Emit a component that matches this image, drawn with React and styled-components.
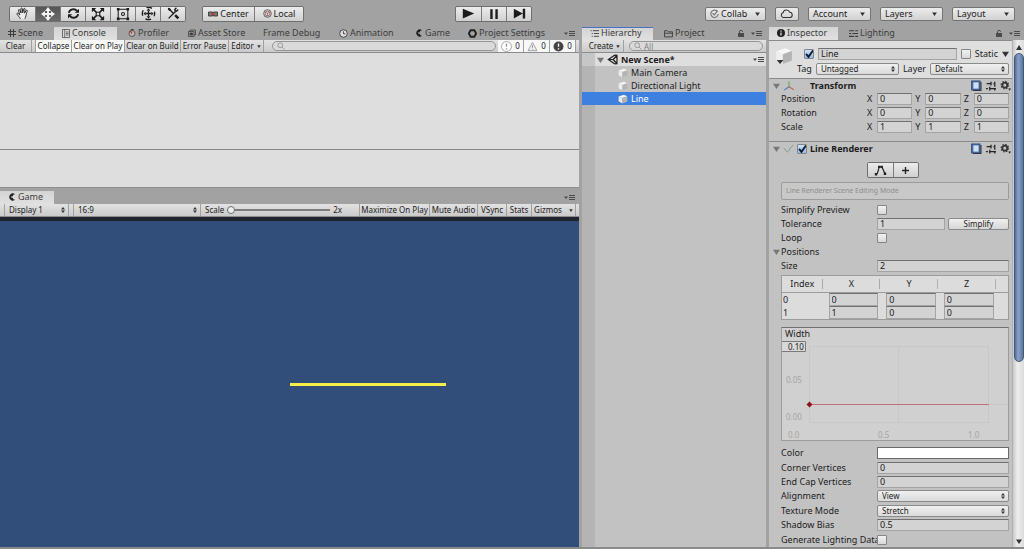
import React from "react";
import styled, { createGlobalStyle, css } from "styled-components";

const GlobalStyle = createGlobalStyle`
  *, *::before, *::after { box-sizing: border-box; }
  body { margin: 0; background: #a2a2a2; }
  body, button, input, select, table {
    font-family: "Noto Sans", "Lucida Grande", sans-serif;
    font-size: 9px;
    line-height: 12px;
    color: #1c1c1c;
  }
  button, input, select { margin: 0; padding: 0; border: 0; border-radius: 0; background: none; appearance: none; outline: none; }
  svg { display: block; flex: none; }
`;

/* ---------- frame ---------- */
const Editor = styled.div`
  display: flex;
  flex-direction: column;
  height: 100vh;
  overflow: hidden;
  border-bottom: 2px solid #8a8a8a;
  background: #a2a2a2;
  white-space: nowrap;
`;
const TopBar = styled.header`
  display: flex;
  align-items: center;
  flex: none;
  height: 27px;
  padding: 0 9px;
`;
const Spacer = styled.div`
  flex: ${(p) => p.$grow || 1} 1 0;
`;
const Workspace = styled.div`
  flex: 1;
  min-height: 0;
  display: grid;
  grid-template-columns: minmax(0, 1fr) 184px 255px;
  column-gap: 3px;
`;
const Column = styled.section`
  display: flex;
  flex-direction: column;
  min-width: 0;
  min-height: 0;
`;

/* ---------- top bar ---------- */
const ButtonGroup = styled.div`
  display: flex;
  height: 16px;
  margin-right: ${(p) => p.$after || 0}px;
  border: 1px solid #6e6e6e;
  border-radius: 2px;
  overflow: hidden;
`;
const GroupButton = styled.button`
  display: flex;
  align-items: center;
  justify-content: center;
  gap: 2px;
  width: ${(p) => p.$w || 25}px;
  background: ${(p) => (p.$on ? "linear-gradient(#555, #6a6a6a)" : "linear-gradient(#ececec, #d0d0d0)")};
  color: ${(p) => (p.$on ? "#f4f4f4" : "#1c1c1c")};
  & + & { border-left: 1px solid #7c7c7c; }
`;
const RightGroup = styled.div`
  display: flex;
  gap: 9px;
`;
const DropButton = styled.button`
  display: flex;
  align-items: center;
  gap: 2px;
  width: ${(p) => p.$w}px;
  height: 14px;
  padding: 0 5px 0 4px;
  border: 1px solid #747474;
  border-radius: 2px;
  background: linear-gradient(#ececec, #d2d2d2);
  & > svg:last-child:not(:first-child) { margin-left: auto; }
`;

/* ---------- tabs ---------- */
const TabBar = styled.nav`
  display: flex;
  align-items: flex-end;
  flex: none;
  height: ${(p) => p.$h || 13}px;
  padding-right: 4px;
`;
const Tab = styled.button`
  display: flex;
  align-items: center;
  gap: 2px;
  width: ${(p) => p.$w}px;
  height: 13px;
  padding: 0 0 1px 8px;
  color: #3c3c3c;
  ${(p) =>
    p.$active &&
    css`
      margin-right: 3px;
      background: linear-gradient(#d4d4d4, #e0e0e0);
    `}
  ${(p) => p.$focus && css`
    background: linear-gradient(#4a6fc4 1px, #d4d4d4 1px, #e0e0e0);
  `}
`;
const TabTools = styled.div`
  display: flex;
  align-items: center;
  gap: 7px;
  height: 13px;
  margin-left: auto;
`;

/* ---------- strips ---------- */
const Strip = styled.div`
  display: flex;
  align-items: stretch;
  flex: none;
  height: 13px;
  border-bottom: 1px solid #8c8c8c;
  padding-right: 3px;
  background: linear-gradient(#e2e2e2, #cacaca);
  font-size: 8px;
`;
const StripButton = styled.button`
  display: flex;
  align-items: center;
  justify-content: center;
  gap: 3px;
  flex: none;
  width: ${(p) => p.$w}px;
  font-size: 8px;
  border-right: 1px solid #a0a0a0;
  background: ${(p) => (p.$on ? "#f8f8f8" : "transparent")};
`;
const Gap = styled.div`
  flex: none;
  width: ${(p) => p.$w}px;
  border-right: ${(p) => (p.$line ? "1px solid #a0a0a0" : "0")};
`;
const SearchBox = styled.label`
  display: flex;
  align-items: center;
  gap: 2px;
  flex: 1;
  min-width: 0;
  margin: 1px ${(p) => p.$right}px 1px ${(p) => p.$left}px;
  padding: 0 4px;
  border: 1px solid #959595;
  border-radius: 6px;
  background: #dadada;
`;
const SearchInput = styled.input`
  flex: 1;
  min-width: 0;
  height: 8px;
  font-size: 8px;
  line-height: 8px;
  &::placeholder { color: #848484; opacity: 1; }
`;

/* ---------- console & game ---------- */
const LogList = styled.div`
  flex: none;
  height: 97px;
  background: #dedede;
  border-bottom: 1px solid #888;
`;
const LogDetail = styled.div`
  flex: none;
  height: 38px;
  background: #dedede;
  border-bottom: 1px solid #8e8e8e;
`;
const StripSelect = styled.div`
  display: grid;
  grid-template-columns: 1fr auto;
  align-items: center;
  flex: none;
  width: ${(p) => p.$w}px;
  padding: 0 3px 0 4px;
  border-right: 1px solid #a0a0a0;
  select { font-size: 8px; }
`;
const ScaleLabel = styled.label`
  display: flex;
  align-items: center;
  flex: 1;
  gap: 3px;
  padding-left: 4px;
`;
const Range = styled.input.attrs({ type: "range" })`
  width: 103px;
  height: 9px;
  &::-webkit-slider-runnable-track { height: 2px; background: #7c7c7c; }
  &::-webkit-slider-thumb {
    appearance: none;
    width: 8px;
    height: 8px;
    margin-top: -3px;
    border: 1px solid #6e6e6e;
    border-radius: 50%;
    background: #eee;
  }
`;
const GameView = styled.div`
  flex: 1;
  display: flex;
  align-items: center;
  border-top: 4px solid #20242c;
  background: #314d79;
`;
const DrawnLine = styled.div`
  width: 27%;
  height: 3px;
  margin-left: 50%;
  background: #f5ee45;
`;

/* ---------- hierarchy ---------- */
const Tree = styled.ul`
  flex: 1;
  margin: 0;
  padding: 0;
  list-style: none;
  background: linear-gradient(90deg, #b4b4b4 13px, #c2c2c2 13px);
`;
const TreeItem = styled.li`
  display: flex;
  align-items: center;
  gap: 3px;
  height: 13px;
  padding-left: 36px;
  color: ${(p) => (p.$selected ? "#fff" : "#1c1c1c")};
  background: ${(p) => (p.$selected ? "#3d80df" : "transparent")};
`;
const SceneRow = styled.li`
  display: flex;
  align-items: center;
  gap: 3px;
  height: 13px;
  padding: 0 2px 0 15px;
  font-weight: bold;
  background: linear-gradient(90deg, #c6c6c6 13px, #dedede 13px);
  & > svg:last-child { margin-left: auto; }
`;

/* ---------- inspector ---------- */
const InspectorBody = styled.div`
  flex: 1;
  min-height: 0;
  display: grid;
  grid-template-columns: minmax(0, 1fr) 12px;
`;
const Properties = styled.div`
  display: flex;
  flex-direction: column;
  min-height: 0;
  border-top: 1px solid #8a8a8a;
  background: #c2c2c2;
`;
const ObjectHeader = styled.div`
  display: grid;
  grid-template-columns: 22px minmax(0, 1fr);
  flex: none;
  height: 38px;
  padding: 6px 3px 0 6px;
  background: #dedede;
  border-bottom: 1px solid #8a8a8a;
`;
const HeaderRows = styled.div`
  display: flex;
  flex-direction: column;
  gap: 2px;
`;
const HeaderRow = styled.div`
  display: flex;
  align-items: center;
  gap: 4px;
  height: 13px;
  padding-left: ${(p) => p.$indent || 0}px;
`;
const TextField = styled.input`
  flex: 1;
  min-width: 0;
  width: 100%;
  height: ${(p) => p.$h || 12}px;
  padding: 0 2px 1px;
  border: 1px solid #a4a4a4;
  border-top-color: #707070;
  background: #d3d3d3;
  line-height: 9px;
`;
const SelectFrame = styled.div`
  display: grid;
  grid-template-columns: 1fr auto;
  align-items: center;
  flex: ${(p) => (p.$w ? "none" : 1)};
  width: ${(p) => (p.$w ? p.$w + "px" : "auto")};
  height: 12px;
  padding: 0 3px 0 4px;
  border: 1px solid #8a8a8a;
  border-radius: 2px;
  background: linear-gradient(#f0f0f0, #dadada);
  select { font-size: 8px; line-height: 10px; }
`;
const Tick = styled.input.attrs({ type: "checkbox" })`
  flex: none;
  width: 10px;
  height: 10px;
  border: 1px solid #858585;
  border-radius: 1px;
  background: linear-gradient(#f2f2f2, #d8d8d8);
  &:checked {
    background: no-repeat center / 9px 9px
        url("data:image/svg+xml,%3Csvg xmlns='http://www.w3.org/2000/svg' viewBox='0 0 9 9'%3E%3Cpath d='M1.5 4.2 3.8 7 8 1' fill='none' stroke='%23101c30' stroke-width='1.8'/%3E%3C/svg%3E"),
      linear-gradient(#cfe2fa, #93bcec);
  }
`;
const ComponentTitle = styled.div`
  display: flex;
  align-items: center;
  flex: none;
  height: ${(p) => (p.$line ? 14 : 13)}px;
  padding: 0 1px 0 4px;
  gap: 3px;
  font-weight: bold;
  border-top: ${(p) => (p.$line ? "1px solid #8a8a8a" : "0")};
`;
const TitleTools = styled.div`
  display: flex;
  align-items: center;
  gap: 4px;
  margin-left: auto;
`;
const Fields = styled.div`
  display: grid;
  grid-auto-rows: ${(p) => (p.$fill ? "minmax(14px, 1fr)" : "14px")};
  flex: ${(p) => (p.$fill ? 1 : "none")};
  padding: 0 3px 0 12px;
`;
const Row = styled.div`
  display: flex;
  align-items: center;
  gap: 3px;
`;
const Label = styled.label`
  flex: none;
  width: ${(p) => p.$w || 93}px;
`;
const Axis = styled.label`
  display: grid;
  grid-template-columns: 10px 1fr;
  align-items: center;
  flex: 1;
  min-width: 0;
`;
const Break = styled.div`
  flex: none;
  height: 7px;
`;
const Foldout = styled.button`
  display: flex;
  align-items: center;
  gap: 1px;
  margin-left: -8px;
`;
const Modes = styled.div`
  display: flex;
  justify-content: center;
  flex: none;
  padding: 7px 0 4px 4px;
`;
const HelpBox = styled.p`
  flex: none;
  height: 18px;
  margin: 0 3px 3px 12px;
  padding: 2px 4px;
  border: 1px solid #9c9c9c;
  border-radius: 2px;
  font-size: 7px;
  background: #c8c8c8;
  color: #8e8e8e;
`;
const SmallButton = styled.button`
  flex: none;
  width: 61px;
  height: 12px;
  border: 1px solid #8a8a8a;
  border-radius: 2px;
  background: linear-gradient(#f0f0f0, #d6d6d6);
  font-size: 8px;
  line-height: 10px;
`;
const PointTable = styled.table`
  flex: none;
  table-layout: fixed;
  width: calc(100% - 15px);
  margin: 2px 3px 7px 12px;
  border-collapse: collapse;
  border: 1px solid #9c9c9c;
  background: #dcdcdc;
  th {
    height: 17px;
    padding: 0;
    font-weight: normal;
    background: linear-gradient(90deg, transparent calc(100% - 1px), #a8a8a8 0) no-repeat center / 100% 10px;
    border-bottom: 1px solid #9c9c9c;
  }
  th:last-child { background: none; }
  td { height: 13px; padding: 0 2px 0 6px; }
  td:first-child { padding-left: 1px; }
  td input { display: block; }
`;
const Curve = styled.figure`
  flex: none;
  margin: 0 3px 5px 12px;
  border: 1px solid #9c9c9c;
  border-top-color: #707070;
  background: #d0d0d0;
  figcaption { padding-left: 3px; height: 12px; line-height: 12px; }
  svg { width: 100%; height: auto; }
  text { font-size: 8px; fill: #a4a4a4; }
  text.current { fill: #222; }
`;
const Swatch = styled.input`
  flex: 1;
  height: 12px;
  border: 1px solid #6a6a6a;
  background: #fff;
  &::-webkit-color-swatch-wrapper { padding: 0; }
  &::-webkit-color-swatch { border: 0; }
`;
const ScrollTrack = styled.div`
  display: flex;
  flex-direction: column;
  align-items: center;
  padding: 5px 0 3px;
  gap: 3px;
  border-left: 1px solid #b0b0b0;
  background: linear-gradient(90deg, #c9c9c9, #ededed 40%, #dcdcdc);
`;
const ScrollThumb = styled.div`
  width: 10px;
  flex: 0 0 62%;
  border: 1px solid #43597c;
  border-radius: 5px;
  background: linear-gradient(90deg, #536e98, #89a2c5 40%, #5b769f);
`;

/* ---------- icons ---------- */
const Svg = ({ w = 8, h = w, box = 16, children, ...rest }) => (
  <svg width={w} height={h} viewBox={`0 0 ${box} ${(box * h) / w}`} fill="none" stroke="currentColor" strokeWidth="1.6" aria-hidden="true" {...rest}>
    {children}
  </svg>
);
const Down = ({ w = 5, color = "#333" }) => (
  <svg width={w} height={w - 1} viewBox="0 0 6 5" fill={color} aria-hidden="true"><path d="M0 0.5h6L3 5z" /></svg>
);
const Up = () => (
  <svg width="6" height="5" viewBox="0 0 6 5" fill="#333" aria-hidden="true"><path d="M0 5h6L3 0z" /></svg>
);
const UpDown = () => (
  <svg width="4" height="6" viewBox="0 0 4 6" fill="#333" aria-hidden="true"><path d="M0 2.6 2 0l2 2.6zM0 3.4h4L2 6z" /></svg>
);
const PaneMenu = () => (
  <svg width="11" height="5" viewBox="0 0 11 5" fill="#4a4a4a" aria-hidden="true">
    <path d="M0 1.500h4L2 4zM5 0h6v1H5zM5 2h6v1H5zM5 4h6v1H5z" />
  </svg>
);
const Lock = () => (
  <svg width="6" height="7" viewBox="0 0 6 7" aria-hidden="true">
    <path d="M0 3h6v4H0z" fill="#4a4a4a" />
    <path d="M1.5 3V1.8a1.5 1.5 0 0 1 3 0" fill="none" stroke="#4a4a4a" />
  </svg>
);
const Hand = () => (
  <Svg w={13} strokeWidth="1.1">
    <path d="M5.4 14.5C4 12 2.3 10.4 1.2 8.9c-.6-1 .7-1.8 1.6-.9L4.7 9.8 3 4.2c-.3-1.2 1.3-1.6 1.7-.5L6.2 7.4 6 2.2c0-1.3 1.7-1.3 1.8 0L8.3 7l1.2-4.6c.4-1.2 1.9-.8 1.7.4L10.500 7.600l1.900-3.200c.6-1 1.900-.3 1.500.8-1 2.600-1.400 4-1.700 5.700-.3 1.500-.8 2.600-1.300 3.600" fill="#eee" />
  </Svg>
);
const Move = () => (
  <Svg w={14} strokeWidth="2.200">
    <path d="M8 3v10M3 8h10" />
    <path d="M8 0l3.500 4.500h-7zM8 16l3.500-4.500h-7zM0 8l4.500-3.500v7zM16 8l-4.500-3.500v7z" fill="currentColor" stroke="none" />
  </Svg>
);
const Rotate = () => (
  <Svg w={13} strokeWidth="2.300">
    <path d="M2.300 7.200c.7-4.500 7-6 10-2.500M13.700 8.800c-.7 4.500-7 6-10 2.500" />
    <path d="M14.800 2v5.200H9.600zM1.200 14V8.800h5.200z" fill="currentColor" stroke="none" />
  </Svg>
);
const Scale = () => (
  <Svg w={14}>
    <path d="M3 3l3 3M13 3l-3 3M3 13l3-3M13 13l-3-3" strokeWidth="2" />
    <path d="M1 1h5L1 6zM15 1v5l-5-5zM1 15v-5l5 5zM15 15h-5l5-5z" fill="currentColor" stroke="none" />
    <path d="M6 6h4v4H6z" strokeWidth="1.300" />
  </Svg>
);
const RectTool = () => (
  <Svg w={14} strokeWidth="1.200">
    <path d="M2.500 2.500h11v11h-11z" /><circle cx="8" cy="8" r="1.700" />
    <path d="M1 1h3v3H1zM12 1h3v3h-3zM1 12h3v3H1zM12 12h3v3h-3z" fill="currentColor" stroke="none" />
  </Svg>
);
const MultiTool = () => (
  <Svg w={15} strokeWidth="1.400">
    <circle cx="8" cy="8" r="6.600" strokeDasharray="6.200 4.170" strokeDashoffset="3.100" />
    <path d="M8 5v6M5 8h6" />
    <path d="M8 2.500l2 2.500H6zM8 13.500l2-2.500H6zM2.500 8L5 6v4zM13.500 8L11 6v4z" fill="currentColor" stroke="none" />
  </Svg>
);
const Wrench = () => (
  <Svg w={13} strokeWidth="1.700">
    <path d="M2 14l8.500-8.500M13.800 3.200l-2 2-2-.8L9.600 3l2-2M1.500 1.500l6 6" />
    <path d="M10 10l4 4" strokeWidth="3" />
    <path d="M1 3l2-2 2 2-2 2z" fill="currentColor" stroke="none" />
  </Svg>
);
const PivotIcon = () => (
  <svg width="10" height="6" viewBox="0 0 10 6" aria-hidden="true">
    <path d="M.5 1h4v4h-4zM5.500 1h4v4h-4z" fill="#777" stroke="#444" /><path d="M3 2h4v2H3z" fill="#b04a4a" />
  </svg>
);
const CubeLine = () => (
  <Svg w={9} stroke="#555"><circle cx="8" cy="8" r="6.800" /><path d="M8 3.500l4 2v5l-4 2-4-2v-5zM4 5.500l4 2 4-2M8 7.500v5" stroke="#964f4f" strokeWidth="1.300" /></Svg>
);
const Play = () => <Svg w={13} fill="currentColor" stroke="none"><path d="M1 2l14 6-14 6z" /></Svg>;
const Pause = () => <Svg w={12} fill="currentColor" stroke="none"><path d="M3 1.500h3.200v13H3zM9.800 1.500H13v13H9.800z" /></Svg>;
const Step = () => <Svg w={13} fill="currentColor" stroke="none"><path d="M1 2l11 6-11 6zM12 2h3v12h-3z" /></Svg>;
const CollabIcon = () => (
  <Svg w={9} stroke="#777" strokeWidth="2"><path d="M13.500 5A6.500 6.500 0 1 0 14.500 9M4.500 7.500l3 3L14 3" /></Svg>
);
const Cloud = () => (
  <Svg w={13} stroke="#333" strokeWidth="1.300"><path d="M4 13a3 3 0 0 1-.3-5.800A4.300 4.300 0 0 1 12 6.500 3.300 3.300 0 0 1 12.500 13z" /></Svg>
);
const Hash = () => <Svg strokeWidth="2"><path d="M5 0v16M11 0v16M0 5h16M0 11h16" /></Svg>;
const ConsoleIcon = () => <Svg w={8} h={9}><path d="M1 1h14v16H1zM5.500 1v16M8 6h5M8 9h5M8 12h5" strokeWidth="1.400" /></Svg>;
const ProfilerIcon = () => <Svg><circle cx="8" cy="9" r="6" fill="#c4b4b4" /><path d="M8 9L4 3" stroke="#b02a2a" strokeWidth="2.200" /><path d="M6 1h5" strokeWidth="2.500" /></Svg>;
const StoreIcon = () => <Svg><path d="M1 5h11v10H1zM4 5V2h11v10h-3" /><path d="M4 8h5v4H4z" fill="currentColor" /></Svg>;
const ClockIcon = () => <Svg w={9}><circle cx="8" cy="8" r="6.800" fill="#ddd" /><path d="M8 4v4.500h3.500" /></Svg>;
const GameIcon = () => <Svg fill="#222" stroke="none"><path d="M14 2.500A7 7 0 1 0 14 13.500L10 12V9.500H6.500v-3H10V4z" /></Svg>;
const HexIcon = () => <Svg w={9} stroke="#222" strokeWidth="3.400"><path d="M4.700 2.300h6.600L14.500 8l-3.200 5.700H4.700L1.500 8z" /></Svg>;
const ListIcon = () => <Svg w={9}><path d="M1 3h2M5 3h11M3 8h2M7 8h9M3 13h2M7 13h9" /></Svg>;
const FolderIcon = () => <Svg w={9}><path d="M1 14V3h5l2 2h7v9zM1 7.500h14" /></Svg>;
const InfoIcon = () => <Svg><circle cx="8" cy="8" r="8" fill="#222" stroke="none" /><path d="M8 3v2.500M8 7v6" stroke="#eee" strokeWidth="2.400" /></Svg>;
const LightIcon = () => <Svg w={9}><path d="M0 3h9M11 3h5M0 8h4M6 8h10M0 13h9M11 13h5" strokeWidth="2" /></Svg>;
const Lens = () => <Svg stroke="#888" strokeWidth="1.500"><circle cx="6.500" cy="6.500" r="4.800" /><path d="M10 10l5 5" /></Svg>;
const Bubble = ({ dark }) => (
  <Svg w={11} stroke={dark ? "none" : "#999"} strokeWidth="1.200">
    <circle cx="8" cy="8" r="7.200" fill={dark ? "#444" : "#fff"} /><path d="M8 3.500v5M8 10.500v1.800" stroke={dark ? "#fff" : "#999"} strokeWidth="2" />
  </Svg>
);
const Warn = () => <Svg w={11} stroke="#999" strokeWidth="1.300"><path d="M8 2l6.500 12h-13z" fill="#eee" /><path d="M8 6v4M8 11.500v1" /></Svg>;
const UnityLogo = () => (
  <Svg w={11} stroke="#222" strokeWidth="1.800"><path d="M11.500 1.500L2 8l9.500 6.500M11.500 1.500l3 .5v12l-3 .5M2 8h7M9 8l5-5.500M9 8l5 5.500" /></Svg>
);
const Cube = ({ w = 10 }) => (
  <Svg w={w} stroke="none">
    <path d="M1 4l8-3 6 2.500-8 3z" fill="#f6f6f6" /><path d="M1 4l6 2.500V15l-6-3.500z" fill="#ececec" /><path d="M7 6.500l8-3V12l-8 3z" fill="#b4b4b4" />
  </Svg>
);
const ObjectIcon = () => (
  <Svg w={18} h={18} stroke="none">
    <path d="M1 4l8-3 6 2.500-8 3z" fill="#f8f8f8" /><path d="M1 4l6 2.500V15l-6-3.500z" fill="#eee" /><path d="M7 6.500l8-3V12l-8 3z" fill="#b4b4b4" /><path d="M1.500 11.500h6L4.500 15z" fill="#333" />
  </Svg>
);
const TransformIcon = () => (
  <Svg w={12} strokeWidth="1.500"><path d="M8 9V1.500" stroke="#72a05a" /><path d="M8 9l-6.500 4.500" stroke="#5578a8" /><path d="M8 9l6.500 4" stroke="#b36a5c" /></Svg>
);
const LineIcon = () => <Svg w={11} stroke="#7f9894" strokeWidth="1.400"><path d="M1 8c3 0 3 5 5.500 5S10 5 15 3.500" /></Svg>;
const Book = () => (
  <Svg w={11}><path d="M1 1.500h12v13H1z" fill="#4f77ad" stroke="#2f4a78" /><path d="M3.500 3.500h7.500v9H3.500z" fill="#cfe0f4" stroke="none" /><path d="M14.500 3v12.500H3" stroke="#334" /></Svg>
);
const Preset = () => <Svg w={10} stroke="#222"><path d="M1 4h8M8 1v6M11 4h1M14 1v8M0 12h3M6 12h10M6 9v6M14 12v3" strokeWidth="2" /></Svg>;
const Gear = () => (
  <Svg w={11} stroke="#333">
    <circle cx="7" cy="7.500" r="3.600" strokeWidth="2.600" /><circle cx="7" cy="7.500" r="5.400" strokeWidth="1.800" strokeDasharray="2.120 2.120" /><path d="M12 12.500h4L14 15.500z" fill="#222" stroke="none" />
  </Svg>
);
const EditPoints = () => (
  <Svg w={13} stroke="#222" strokeWidth="1.500">
    <path d="M2.500 12.500C5.500 12 5 6 6.500 4M9.500 4c2 1.500 2 5 4 7.500" /><path d="M6.500 3.500h3" /><path d="M5 2h3v3H5zM8.500 2h2.500v3H8.500zM1 11h3v3H1zM12 10.500h3v3h-3z" fill="#222" stroke="none" />
  </Svg>
);
const Plus = () => <Svg w={11} stroke="#222" strokeWidth="2"><path d="M8 3v10M3 8h10" /></Svg>;

/* ---------- pieces ---------- */
const tools = [["Hand", Hand], ["Move", Move], ["Rotate", Rotate], ["Scale", Scale], ["Rect", RectTool], ["Transform", MultiTool], ["Custom", Wrench]];
const mainTabs = [
  ["Scene", Hash, 54], ["Console", ConsoleIcon, 63], ["Profiler", ProfilerIcon, 60], ["Asset Store", StoreIcon, 75],
  ["Frame Debug", null, 76], ["Animation", ClockIcon, 76], ["Game", GameIcon, 53], ["Project Settings", HexIcon, 96],
];
const transformRows = [["Position", 0], ["Rotation", 0], ["Scale", 1]];

const Popup = ({ frame: Frame = SelectFrame, w, id, label, value }) => (
  <Frame $w={w}>
    <select id={id} aria-label={label} defaultValue={value}><option>{value}</option></select>
    <UpDown />
  </Frame>
);
const ComponentTools = () => (
  <TitleTools><Book /><Preset /><Gear /></TitleTools>
);
const Field = ({ id, label, children }) => (
  <Row><Label htmlFor={id}>{label}</Label>{children}</Row>
);

function Toolbar() {
  return (
    <TopBar>
      <ButtonGroup $after={16}>
        {tools.map(([name, Icon]) => (
          <GroupButton key={name} aria-label={name} $on={name === "Move"}><Icon /></GroupButton>
        ))}
      </ButtonGroup>
      <ButtonGroup>
        <GroupButton $w={51}><PivotIcon />Center</GroupButton>
        <GroupButton $w={49}><CubeLine />Local</GroupButton>
      </ButtonGroup>
      <Spacer $grow={151} />
      <ButtonGroup>
        <GroupButton aria-label="Play"><Play /></GroupButton>
        <GroupButton aria-label="Pause"><Pause /></GroupButton>
        <GroupButton aria-label="Step"><Step /></GroupButton>
      </ButtonGroup>
      <Spacer $grow={173} />
      <RightGroup>
        <DropButton $w={61}><CollabIcon />Collab<Down /></DropButton>
        <DropButton $w={24} aria-label="Cloud"><Cloud /></DropButton>
        {["Account", "Layers", "Layout"].map((t) => (
          <DropButton key={t} $w={63}><span>{t}</span><Down /></DropButton>
        ))}
      </RightGroup>
    </TopBar>
  );
}

function LeftColumn() {
  return (
    <Column>
      <TabBar>
        {mainTabs.map(([name, Icon, w]) => (
          <Tab key={name} $w={w} $active={name === "Console"}>{Icon && <Icon />}{name}</Tab>
        ))}
        <TabTools><PaneMenu /></TabTools>
      </TabBar>
      <Strip>
        <StripButton $w={32}>Clear</StripButton>
        <Gap $w={4} $line />
        <StripButton $w={36} $on>Collapse</StripButton>
        <StripButton $w={53} $on>Clear on Play</StripButton>
        <StripButton $w={56}>Clear on Build</StripButton>
        <StripButton $w={48}>Error Pause</StripButton>
        <StripButton $w={35}>Editor<Down w={4} /></StripButton>
        <SearchBox $left={8} $right={2}><Lens /><SearchInput aria-label="Search console" /></SearchBox>
        <StripButton $w={26} $on><Bubble />0</StripButton>
        <StripButton $w={26} $on><Warn />0</StripButton>
        <StripButton $w={26} $on><Bubble dark />0</StripButton>
      </Strip>
      <LogList />
      <LogDetail />
      <TabBar $h={16}>
        <Tab $w={54} $active><GameIcon />Game</Tab>
        <TabTools><PaneMenu /></TabTools>
      </TabBar>
      <Strip>
        <Gap $w={5} $line />
        <Popup frame={StripSelect} w={64} label="Display" value="Display 1" />
        <Gap $w={5} $line />
        <Popup frame={StripSelect} w={127} label="Aspect" value="16:9" />
        <ScaleLabel>Scale<Range defaultValue="0" /><span>2x</span></ScaleLabel>
        <Gap $w={1} $line />
        <StripButton $w={70}>Maximize On Play</StripButton>
        <StripButton $w={48}>Mute Audio</StripButton>
        <StripButton $w={29}>VSync</StripButton>
        <StripButton $w={25}>Stats</StripButton>
        <StripButton $w={44}>Gizmos<Gap $w={1} /><Down w={4} /></StripButton>
      </Strip>
      <GameView><DrawnLine /></GameView>
    </Column>
  );
}

function Hierarchy() {
  return (
    <Column>
      <TabBar>
        <Tab $w={71} $active $focus><ListIcon />Hierarchy</Tab>
        <Tab $w={60}><FolderIcon />Project</Tab>
        <TabTools><Lock /><PaneMenu /></TabTools>
      </TabBar>
      <Strip>
        <Gap $w={4} />
        <StripButton $w={38}>Create<Down w={4} /></StripButton>
        <SearchBox $left={5} $right={0}><Lens /><SearchInput aria-label="Search hierarchy" placeholder="All" /></SearchBox>
      </Strip>
      <Tree>
        <SceneRow><Down w={7} color="#777" /><UnityLogo />New Scene*<PaneMenu /></SceneRow>
        <TreeItem><Cube />Main Camera</TreeItem>
        <TreeItem><Cube />Directional Light</TreeItem>
        <TreeItem $selected><Cube />Line</TreeItem>
      </Tree>
    </Column>
  );
}

function WidthCurve() {
  return (
    <Curve>
      <figcaption>Width</figcaption>
      <svg viewBox="0 0 226 100" fill="none" role="img" aria-label="Width over length">
        <path d="M27.500 6v76M116.500 6v76M206.500 6v76M27 6.500h180M207 64.500h19M27 82.500h180" stroke="#c8c8c8" />
        <path d="M0 1.500h23.500v10H0" fill="#d8d8d8" stroke="#7a7a7a" />
        <text className="current" x="6" y="10">0.10</text>
        <text x="4" y="43">0.05</text>
        <text x="4" y="80">0.00</text>
        <text x="6" y="98">0.0</text>
        <text x="96" y="98">0.5</text>
        <text x="186" y="98">1.0</text>
        <path d="M27 64h180v1H27z" fill="#c4707a" />
        <path d="M27.500 61.500l3 3-3 3-3-3z" fill="#8c1420" />
      </svg>
    </Curve>
  );
}

function Inspector() {
  return (
    <Column>
      <TabBar>
        <Tab $w={69} $active><InfoIcon />Inspector</Tab>
        <Tab $w={65}><LightIcon />Lighting</Tab>
        <TabTools><Lock /><PaneMenu /></TabTools>
      </TabBar>
      <InspectorBody>
        <Properties>
          <ObjectHeader>
            <ObjectIcon />
            <HeaderRows>
              <HeaderRow $indent={7}>
                <Tick defaultChecked aria-label="Active" />
                <TextField aria-label="Name" defaultValue="Line" />
                <Tick id="static" />
                <label htmlFor="static">Static</label>
                <Down w={7} />
              </HeaderRow>
              <HeaderRow>
                <label htmlFor="tag">Tag</label>
                <Popup id="tag" w={83} value="Untagged" />
                <label htmlFor="layer">Layer</label>
                <Popup id="layer" value="Default" />
              </HeaderRow>
            </HeaderRows>
          </ObjectHeader>
          <ComponentTitle>
            <Down w={7} color="#777" /><TransformIcon /><Gap $w={9} />Transform<ComponentTools />
          </ComponentTitle>
          <Fields>
            {transformRows.map(([name, v]) => (
              <Row key={name}>
                <Label as="span" $w={83}>{name}</Label>
                {["X", "Y", "Z"].map((a) => (
                  <Axis key={a}>{a}<TextField aria-label={`${name} ${a}`} defaultValue={v} /></Axis>
                ))}
              </Row>
            ))}
          </Fields>
          <Break />
          <ComponentTitle $line>
            <Down w={7} color="#777" /><LineIcon /><Tick id="renderer" defaultChecked />
            <label htmlFor="renderer">Line Renderer</label><ComponentTools />
          </ComponentTitle>
          <Modes>
            <ButtonGroup>
              <GroupButton aria-label="Edit points"><EditPoints /></GroupButton>
              <GroupButton aria-label="Create points"><Plus /></GroupButton>
            </ButtonGroup>
          </Modes>
          <HelpBox>Line Renderer Scene Editing Mode</HelpBox>
          <Fields>
            <Field id="preview" label="Simplify Preview"><Tick id="preview" /></Field>
            <Field id="tolerance" label="Tolerance">
              <TextField id="tolerance" defaultValue="1" /><SmallButton>Simplify</SmallButton>
            </Field>
            <Field id="loop" label="Loop"><Tick id="loop" /></Field>
            <Row><Foldout><Down w={7} color="#777" />Positions</Foldout></Row>
            <Field id="size" label="Size"><TextField id="size" defaultValue="2" /></Field>
          </Fields>
          <PointTable>
            <colgroup><col width="41" /><col /><col /><col /><col width="13" /></colgroup>
            <thead><tr><th>Index</th><th>X</th><th>Y</th><th>Z</th><th /></tr></thead>
            <tbody>
              {[[0, 0, 0, 0], [1, 1, 0, 0]].map(([i, ...xs]) => (
                <tr key={i}>
                  <td>{i}</td>
                  {xs.map((v, k) => <td key={k}><TextField $h={13} aria-label={`Point ${i} ${"XYZ"[k]}`} defaultValue={v} /></td>)}
                  <td />
                </tr>
              ))}
            </tbody>
          </PointTable>
          <WidthCurve />
          <Fields $fill>
            <Field id="color" label="Color"><Swatch id="color" type="color" defaultValue="#ffffff" /></Field>
            <Field id="corner" label="Corner Vertices"><TextField id="corner" defaultValue="0" /></Field>
            <Field id="cap" label="End Cap Vertices"><TextField id="cap" defaultValue="0" /></Field>
            <Field id="align" label="Alignment"><Popup id="align" value="View" /></Field>
            <Field id="texture" label="Texture Mode"><Popup id="texture" value="Stretch" /></Field>
            <Field id="bias" label="Shadow Bias"><TextField id="bias" defaultValue="0.5" /></Field>
            <Field id="lighting" label="Generate Lighting Data"><Tick id="lighting" /></Field>
          </Fields>
        </Properties>
        <ScrollTrack><Up /><ScrollThumb /><Spacer /><Down w={6} /></ScrollTrack>
      </InspectorBody>
    </Column>
  );
}

export default function App() {
  return (
    <>
      <GlobalStyle />
      <Editor>
        <Toolbar />
        <Workspace>
          <LeftColumn />
          <Hierarchy />
          <Inspector />
        </Workspace>
      </Editor>
    </>
  );
}
